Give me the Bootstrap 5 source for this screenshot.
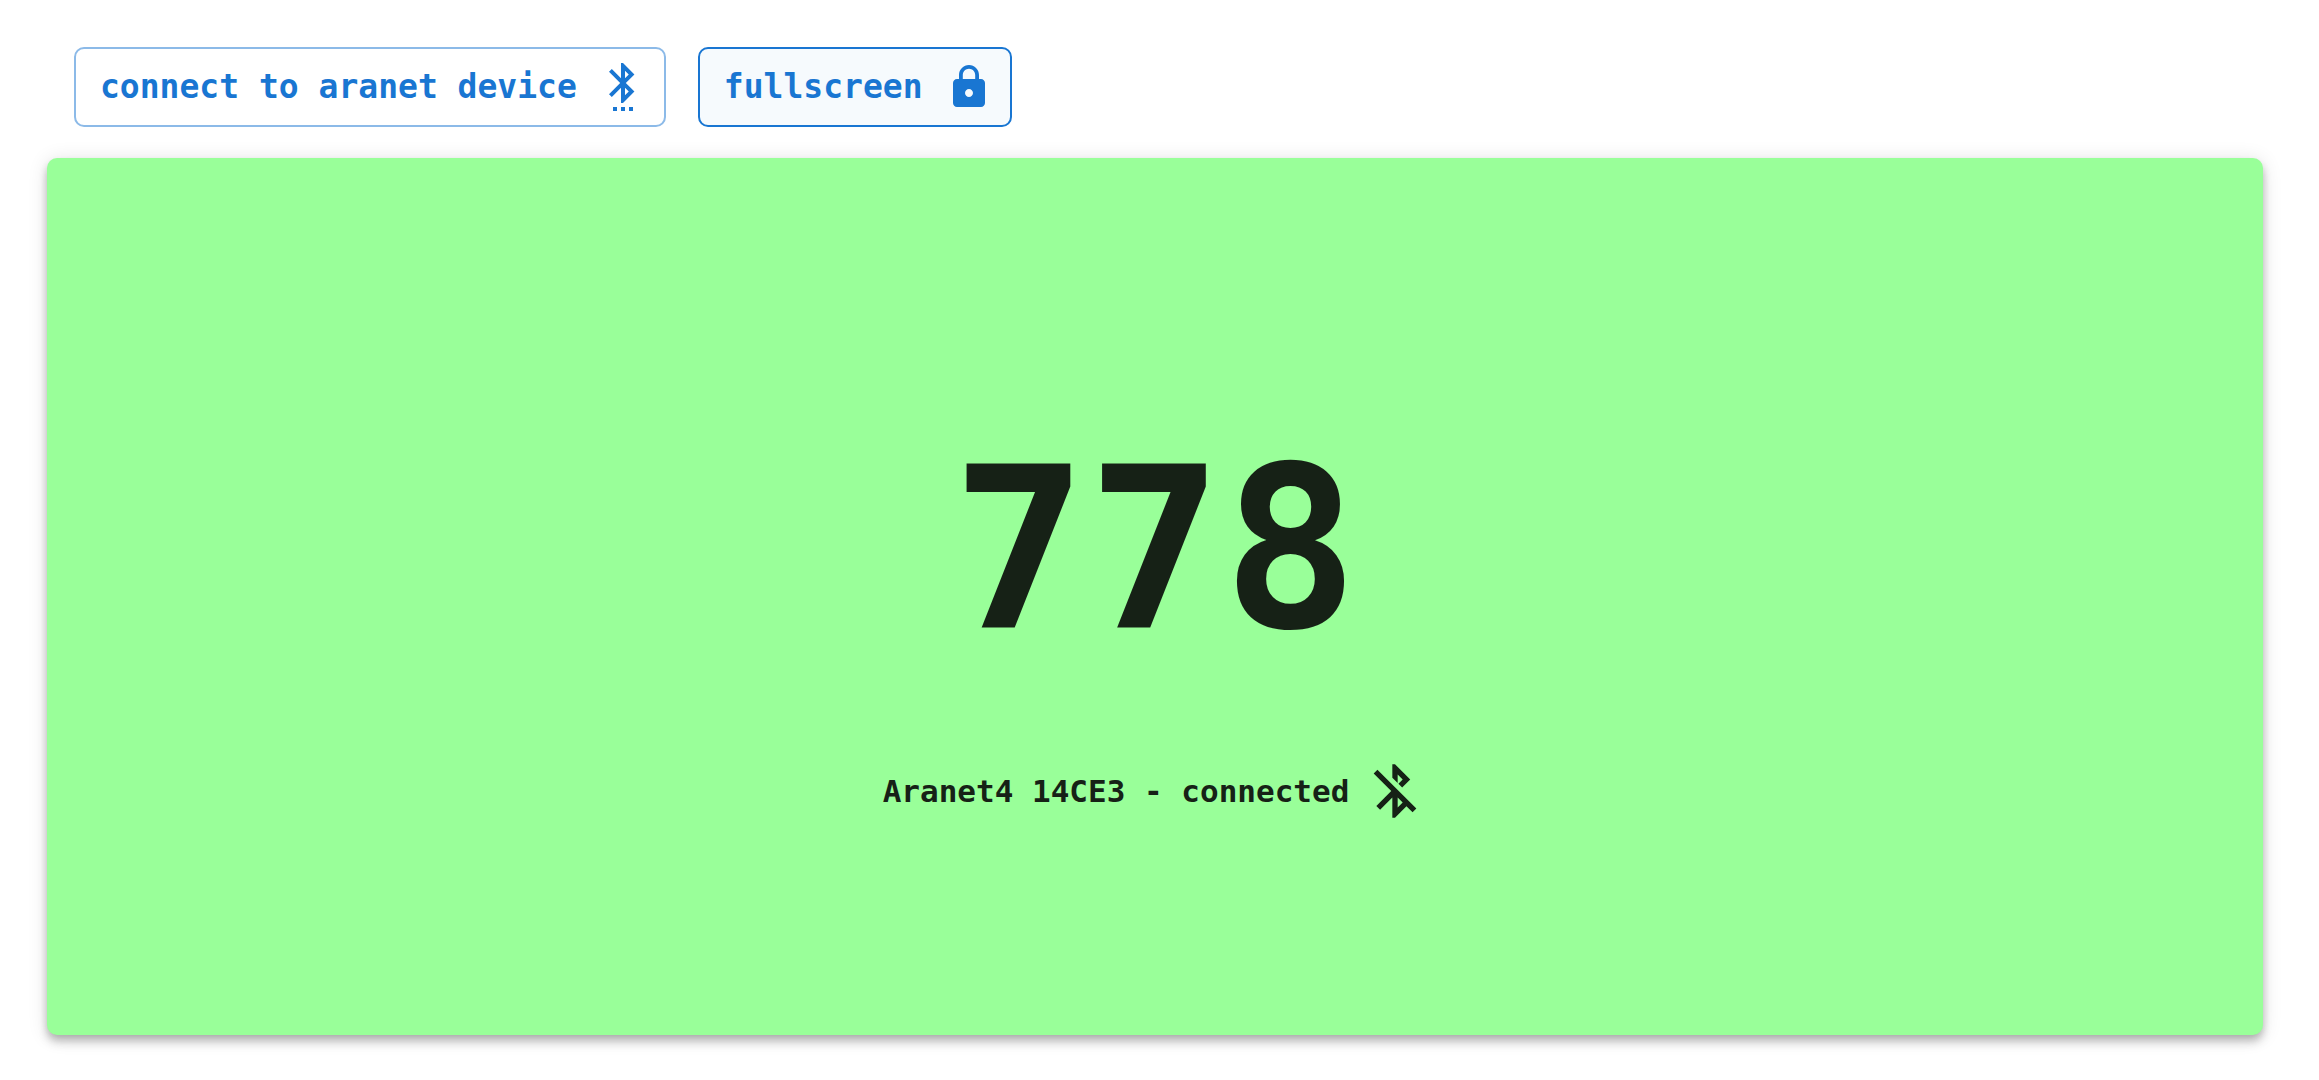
<!DOCTYPE html>
<html lang="en">
<head>
<meta charset="utf-8">
<meta name="viewport" content="width=device-width, initial-scale=1">
<title>Aranet CO2 monitor</title>
<link href="https://cdn.jsdelivr.net/npm/bootstrap@5.3.0/dist/css/bootstrap.min.css" rel="stylesheet">
<style>
  body { font-family: "DejaVu Sans Mono", "Liberation Mono", monospace; font-weight: 700; background: #fff; }
  .page { padding: 47px 56px 45px 47px; }
  .toolbar-row { gap: 32px; margin: 0 27px 31px; }
  .btn-tool {
    --bs-btn-color: #1976d2;
    --bs-btn-border-color: rgba(25, 118, 210, .5);
    --bs-btn-hover-color: #1976d2;
    --bs-btn-hover-bg: rgba(25, 118, 210, .04);
    --bs-btn-hover-border-color: #1976d2;
    --bs-btn-active-color: #1976d2;
    --bs-btn-active-bg: rgba(25, 118, 210, .04);
    --bs-btn-active-border-color: #1976d2;
    --bs-btn-border-width: 2px;
    --bs-btn-border-radius: 10px;
    --bs-btn-font-size: 33px;
    --bs-btn-font-weight: 700;
    --bs-btn-line-height: 48px;
    --bs-btn-padding-y: 14px;
    gap: 22px;
    padding-left: 24px;
    padding-right: 17px;
  }
  .icon-tool { width: 48px; height: 48px; fill: currentColor; }
  .reading-panel {
    background: #9f9;
    color: #162116;
    border-radius: 10px;
    box-shadow: 0 4px 8px -2px rgba(0, 0, 0, .2), 0 8px 10px rgba(0, 0, 0, .14), 0 2px 20px rgba(0, 0, 0, .12);
  }
  .reading-value { font-size: 225px; line-height: 262px; font-weight: 700; margin: 48px 0 79px; }
  .device-row { gap: 14px; font-size: 31px; line-height: 36px; }
  .icon-device { width: 64px; height: 64px; fill: currentColor; }
</style>
<script src="https://cdn.jsdelivr.net/npm/bootstrap@5.3.0/dist/js/bootstrap.bundle.min.js" defer></script>
</head>
<body>
<div class="page d-flex flex-column min-vh-100">
  <header class="toolbar-row d-flex flex-wrap">
    <button type="button" class="btn btn-tool d-inline-flex align-items-center">connect to aranet device
      <svg class="icon-tool" viewBox="0 0 24 24" aria-hidden="true"><path d="M11 24h2v-2h-2v2zm-4 0h2v-2H7v2zm8 0h2v-2h-2v2zm2.710-18.290L12 0h-1v7.590L6.410 3 5 4.410 10.590 10 5 15.590 6.410 17 11 12.410V20h1l5.710-5.710-4.300-4.290 4.300-4.290zM13 3.830l1.880 1.880L13 7.590V3.830zm1.880 10.460L13 16.170v-3.760l1.880 1.880z"/></svg>
    </button>
    <button type="button" class="btn btn-tool active d-inline-flex align-items-center">fullscreen
      <svg class="icon-tool" viewBox="0 0 24 24" aria-hidden="true"><path d="M18 8h-1V6c0-2.760-2.240-5-5-5S7 3.240 7 6v2H6c-1.100 0-2 .9-2 2v10c0 1.100.9 2 2 2h12c1.100 0 2-.9 2-2V10c0-1.100-.9-2-2-2zm-6 9c-1.100 0-2-.9-2-2s.9-2 2-2 2 .9 2 2-.9 2-2 2zm3.100-9H8.900V6c0-1.710 1.390-3.100 3.100-3.100 1.710 0 3.100 1.390 3.100 3.100v2z"/></svg>
    </button>
  </header>
  <main class="reading-panel flex-grow-1 d-flex flex-column align-items-center justify-content-center">
    <h1 class="reading-value">778</h1>
    <div class="device-row d-flex align-items-center">
      <span>Aranet4 14CE3 - connected</span>
      <svg class="icon-device" viewBox="0 0 24 24" aria-hidden="true"><path d="M13 5.830l1.880 1.880-1.600 1.600 1.410 1.410 3.020-3.020L12 2h-1v5.030l2 2v-3.200zM5.410 4L4 5.410 10.590 12 5 17.590 6.410 19 11 14.410V22h1l4.290-4.290 2.300 2.290L20 18.590 5.410 4zM13 18.170v-3.760l1.880 1.880L13 18.170z"/></svg>
    </div>
  </main>
</div>
</body>
</html>
